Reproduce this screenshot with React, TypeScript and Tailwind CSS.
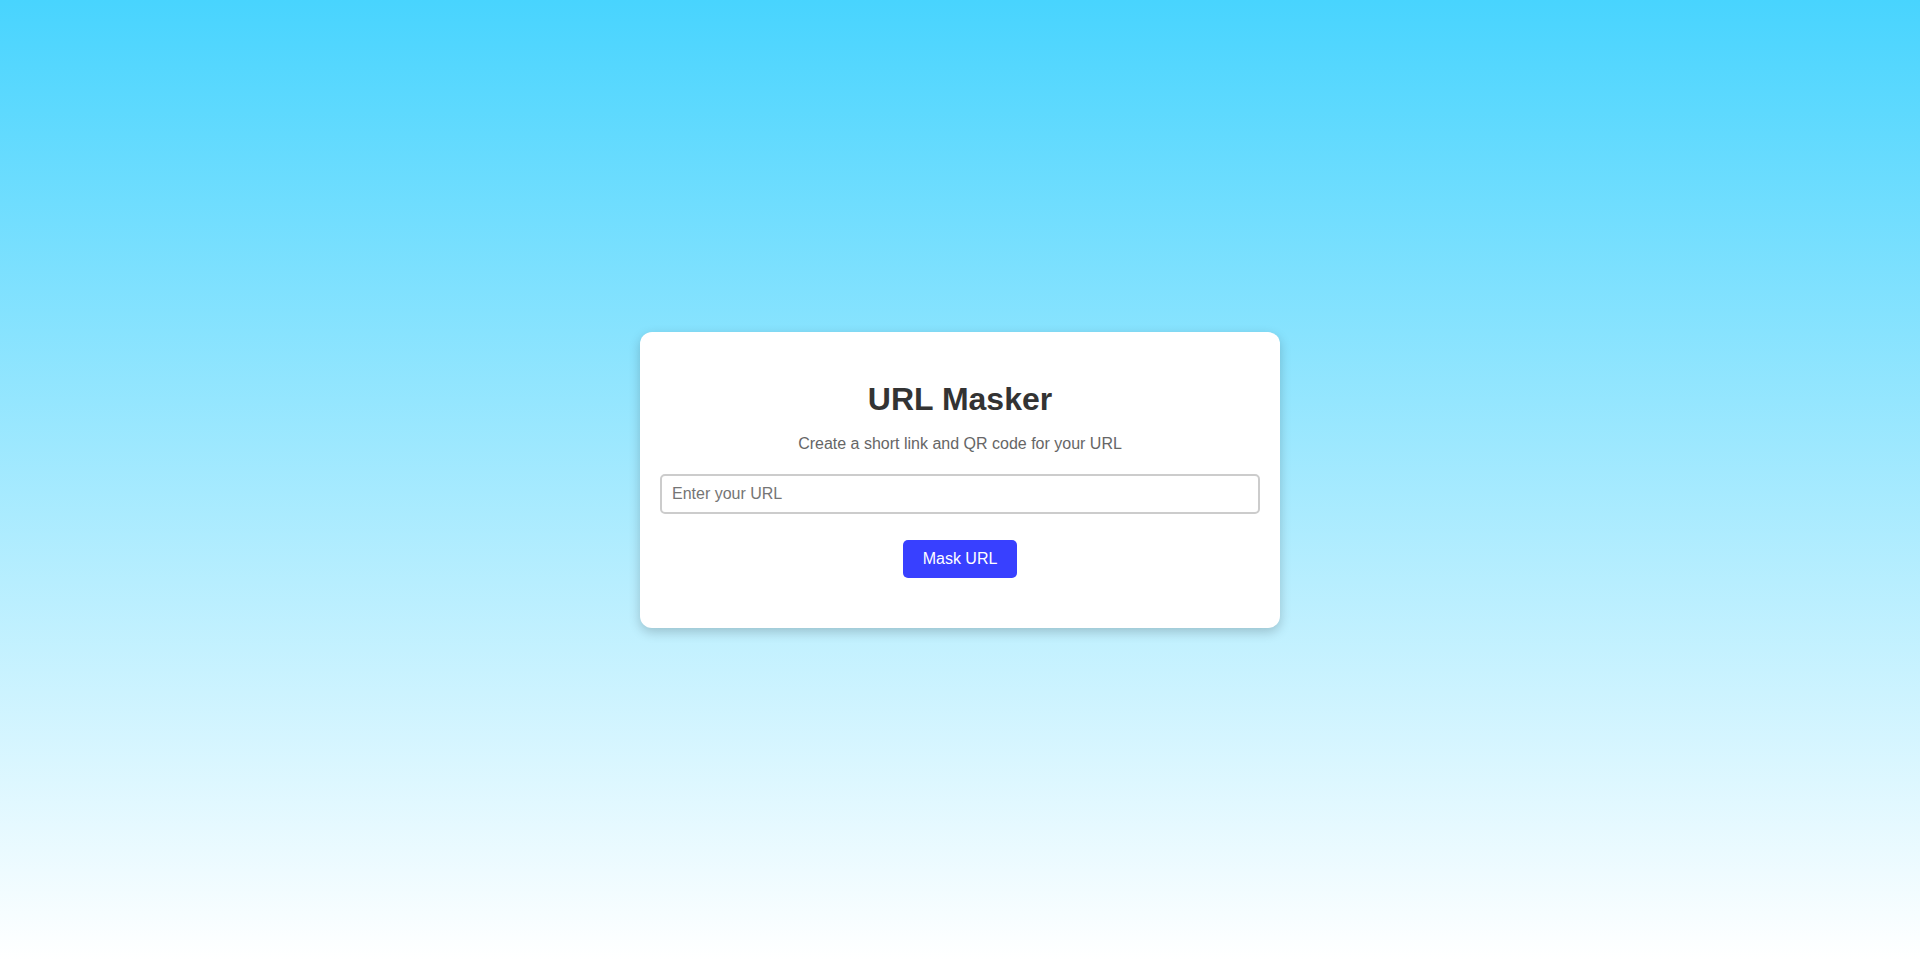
import React, { useState } from "react";

const App: React.FC = () => {
  const [url, setUrl] = useState("");

  return (
    <div
      className="min-h-screen w-full flex items-center justify-center bg-[linear-gradient(to_bottom,#48d4fe,#ffffff)]"
      style={{ fontFamily: '"Liberation Sans", Arial, sans-serif' }}
    >
      <div className="w-[640px] bg-white rounded-xl px-5 pt-[49px] pb-[50px] shadow-[0_4px_12px_rgba(0,0,0,0.2)] flex flex-col items-center">
        <h1 className="text-[32px] leading-[37px] font-bold text-[#333333]">URL Masker</h1>
        <p className="mt-[17px] text-base leading-[18px] text-[#666666]">
          Create a short link and QR code for your URL
        </p>

        <input
          type="text"
          placeholder="Enter your URL"
          className="mt-[21px] w-full h-10 px-[10px] text-base text-[#333] border-2 border-[#cccccc] rounded-[5px] outline-none placeholder:text-[#757575]"
          value={url}
          onChange={(e) => setUrl(e.target.value)}
        />

        <button className="mt-[26px] h-[38px] px-5 bg-[#3840ff] text-white text-base rounded-[5px]">
          Mask URL
        </button>
      </div>
    </div>
  );
};

export default App;
